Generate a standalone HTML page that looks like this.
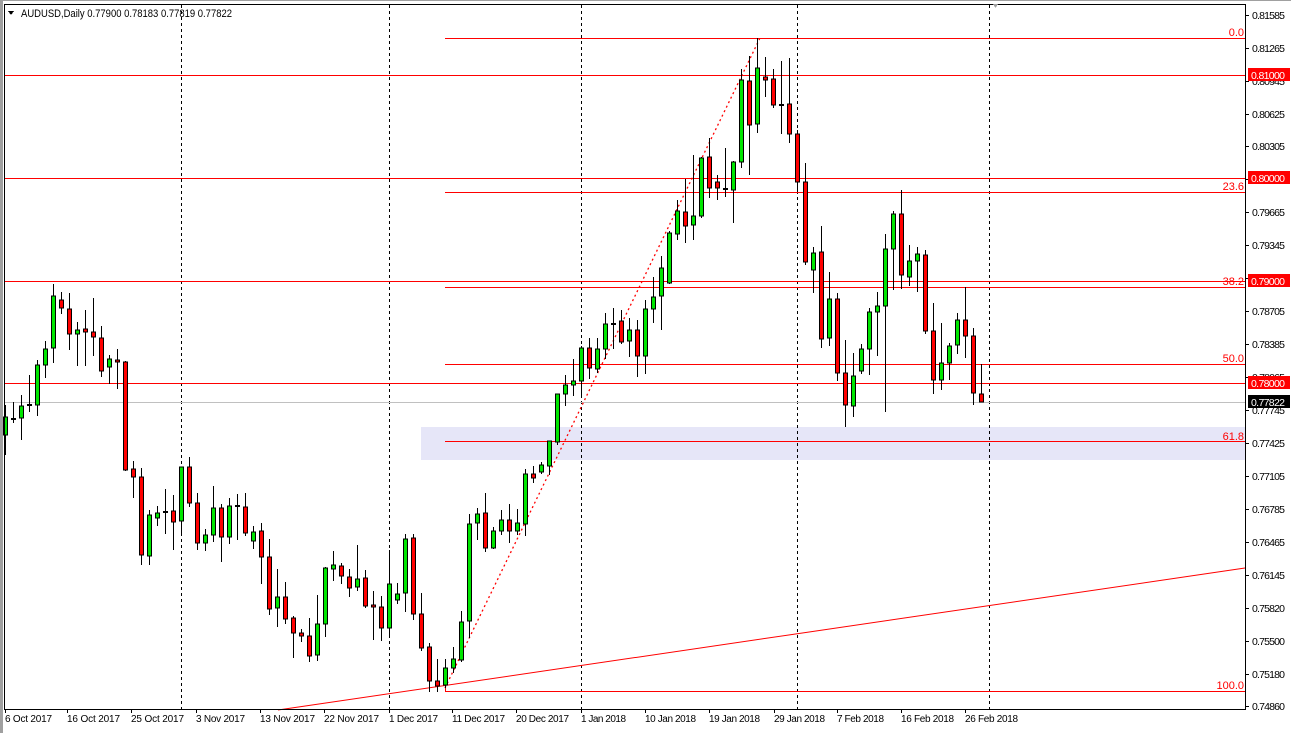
<!DOCTYPE html>
<html><head><meta charset="utf-8"><style>
html,body{margin:0;padding:0;background:#fff;}
body{width:1291px;height:733px;overflow:hidden;position:relative;font-family:"Liberation Sans",Arial,sans-serif;}
svg{position:absolute;left:0;top:0;}
text{font-family:"Liberation Sans",Arial,sans-serif;font-size:11px;}
.p{font-size:10.5px}
.d{font-size:10px}
</style></head><body>
<svg width="1291" height="733" viewBox="0 0 1291 733" shape-rendering="crispEdges">
<rect x="0" y="0" width="1291" height="733" fill="#fff"/>
<rect x="0" y="0" width="3" height="733" fill="#a0a0a0"/>
<rect x="0" y="0" width="1291" height="1" fill="#a0a0a0"/>
<rect x="421" y="427" width="824" height="33" fill="#e6e6f8"/>
<g stroke="#000" stroke-dasharray="3,3" stroke-width="1">
<path d="M181.5 5V709M389.5 5V709M581.5 5V709M797.5 5V709M989.5 5V709"/>
</g>
<g stroke="#ff0000" stroke-width="1">
<path d="M4 75.5H1245M4 178.5H1245M4 281.5H1245M4 383.5H1245"/>
<path d="M445 38.5H1245M445 192.5H1245M445 287.5H1245M445 364.5H1245M445 441.5H1245M445 691.5H1245"/>
<path d="M445.5 682V691"/>
</g>
<path d="M4 402.5H1245" stroke="#c0c0c0"/>
<line x1="278" y1="710" x2="1245" y2="568" stroke="#ff0000" stroke-width="1" shape-rendering="auto"/>
<line x1="445" y1="688" x2="760" y2="38" stroke="#ff0000" stroke-width="1.3" stroke-dasharray="2,3" shape-rendering="auto"/>
<g fill="#ff0000" font-size="10" text-anchor="end">
<text x="1244" y="36">0.0</text>
<text x="1244" y="190">23.6</text>
<text x="1244" y="285">38.2</text>
<text x="1244" y="362">50.0</text>
<text x="1244" y="440">61.8</text>
<text x="1244" y="689">100.0</text>
</g>
<g transform="translate(0.5,0)">
<path stroke="#000" stroke-width="1" fill="none" d="M5 405V455M13 402V423M21 395V440M29 375V412M37 360V416M45 341V378M53 284V363M61 292V314M69 293V350M77 322V366M85 310V366M93 298V356M101 326V377M109 355V384M117 349V389M125 361V471M133 461V498M141 468V565M149 510V565M157 506V526M165 489V534M173 495V550M181 467V535M189 457V507M197 493V550M205 529V551M213 486V542M221 504V562M229 498V544M237 494V540M245 493V536M253 526V549M261 523V584M269 539V615M277 569V627M285 582V624M293 616V658M301 629V642M309 618V662M317 595V661M325 567V637M333 551V581M341 563V584M349 569V597M357 545V591M365 570V608M373 591V640M381 596V641M389 550V636M397 583V604M405 534V612M413 534V620M421 593V651M429 643V692M437 659V692M445 659V688M453 647V673M461 611V662M469 514V638M477 508V540M485 493V552M493 527V549M501 510V535M509 504V543M517 509V535M525 469V536M533 466V483M541 462V474M549 441V475M557 394V445M565 375V406M573 359V396M581 346V396M589 338V379M597 338V373M605 313V359M613 308V349M621 310V344M629 318V357M637 320V377M645 300V374M653 277V323M661 256V330M669 231V284M677 200V240M685 179V243M693 155V240M701 157V218M709 138V198M717 175V200M725 148V197M733 161V223M741 69V168M749 56V175M757 38V133M765 57V97M773 69V108M781 61V134M789 58V143M797 130V192M805 163V265M813 247V293M821 226V348M829 272V346M837 293V381M845 340V427M853 353V417M861 344V374M869 308V375M877 292V356M885 234V412M893 211V290M901 190V289M909 245V286M917 247V292M925 250V334M933 303V394M941 323V390M949 343V380M957 313V354M965 287V358M973 328V405M981 364V402"/>
<g stroke="#000" stroke-width="1" fill="#00e600">
<rect x="3" y="417" width="4" height="18"/>
<rect x="19" y="406" width="4" height="12"/>
<rect x="35" y="365" width="4" height="40"/>
<rect x="43" y="349" width="4" height="16"/>
<rect x="51" y="296" width="4" height="52"/>
<rect x="75" y="330" width="4" height="4"/>
<rect x="107" y="359" width="4" height="8"/>
<rect x="147" y="515" width="4" height="41"/>
<rect x="155" y="513" width="4" height="5"/>
<rect x="179" y="467" width="4" height="54"/>
<rect x="203" y="535" width="4" height="8"/>
<rect x="211" y="508" width="4" height="27"/>
<rect x="227" y="506" width="4" height="31"/>
<rect x="251" y="532" width="4" height="9"/>
<rect x="275" y="597" width="4" height="11"/>
<rect x="315" y="624" width="4" height="31"/>
<rect x="323" y="568" width="4" height="56"/>
<rect x="331" y="565" width="4" height="4"/>
<rect x="355" y="579" width="4" height="8"/>
<rect x="387" y="584" width="4" height="44"/>
<rect x="395" y="594" width="4" height="6"/>
<rect x="403" y="539" width="4" height="54"/>
<rect x="443" y="668" width="4" height="17"/>
<rect x="451" y="659" width="4" height="9"/>
<rect x="459" y="622" width="4" height="38"/>
<rect x="467" y="524" width="4" height="97"/>
<rect x="475" y="514" width="4" height="9"/>
<rect x="491" y="531" width="4" height="17"/>
<rect x="499" y="520" width="4" height="11"/>
<rect x="515" y="523" width="4" height="8"/>
<rect x="523" y="474" width="4" height="50"/>
<rect x="539" y="465" width="4" height="7"/>
<rect x="547" y="441" width="4" height="25"/>
<rect x="555" y="394" width="4" height="48"/>
<rect x="563" y="385" width="4" height="9"/>
<rect x="571" y="381" width="4" height="4"/>
<rect x="579" y="348" width="4" height="33"/>
<rect x="595" y="349" width="4" height="20"/>
<rect x="603" y="324" width="4" height="25"/>
<rect x="627" y="330" width="4" height="11"/>
<rect x="643" y="309" width="4" height="47"/>
<rect x="651" y="297" width="4" height="12"/>
<rect x="659" y="268" width="4" height="28"/>
<rect x="667" y="233" width="4" height="50"/>
<rect x="675" y="211" width="4" height="23"/>
<rect x="691" y="216" width="4" height="9"/>
<rect x="699" y="158" width="4" height="58"/>
<rect x="731" y="162" width="4" height="28"/>
<rect x="739" y="80" width="4" height="82"/>
<rect x="755" y="68" width="4" height="56"/>
<rect x="811" y="253" width="4" height="17"/>
<rect x="827" y="299" width="4" height="39"/>
<rect x="851" y="376" width="4" height="30"/>
<rect x="859" y="349" width="4" height="22"/>
<rect x="867" y="312" width="4" height="37"/>
<rect x="875" y="306" width="4" height="6"/>
<rect x="883" y="249" width="4" height="57"/>
<rect x="891" y="214" width="4" height="35"/>
<rect x="907" y="261" width="4" height="16"/>
<rect x="915" y="254" width="4" height="7"/>
<rect x="939" y="363" width="4" height="17"/>
<rect x="947" y="346" width="4" height="17"/>
<rect x="955" y="320" width="4" height="25"/>
</g>
<g stroke="#000" stroke-width="1" fill="#ff0000">
<rect x="59" y="300" width="4" height="8"/>
<rect x="67" y="309" width="4" height="25"/>
<rect x="83" y="329" width="4" height="3"/>
<rect x="91" y="332" width="4" height="5"/>
<rect x="99" y="338" width="4" height="33"/>
<rect x="115" y="360" width="4" height="2"/>
<rect x="123" y="362" width="4" height="108"/>
<rect x="131" y="469" width="4" height="8"/>
<rect x="139" y="477" width="4" height="78"/>
<rect x="171" y="511" width="4" height="11"/>
<rect x="187" y="467" width="4" height="36"/>
<rect x="195" y="503" width="4" height="40"/>
<rect x="219" y="508" width="4" height="29"/>
<rect x="243" y="507" width="4" height="26"/>
<rect x="259" y="531" width="4" height="26"/>
<rect x="267" y="557" width="4" height="52"/>
<rect x="283" y="597" width="4" height="22"/>
<rect x="291" y="618" width="4" height="15"/>
<rect x="299" y="633" width="4" height="3"/>
<rect x="307" y="636" width="4" height="20"/>
<rect x="339" y="566" width="4" height="10"/>
<rect x="347" y="577" width="4" height="11"/>
<rect x="363" y="578" width="4" height="28"/>
<rect x="371" y="605" width="4" height="2"/>
<rect x="379" y="607" width="4" height="21"/>
<rect x="411" y="538" width="4" height="76"/>
<rect x="419" y="614" width="4" height="34"/>
<rect x="427" y="647" width="4" height="34"/>
<rect x="435" y="681" width="4" height="5"/>
<rect x="483" y="513" width="4" height="35"/>
<rect x="507" y="520" width="4" height="11"/>
<rect x="531" y="474" width="4" height="4"/>
<rect x="587" y="348" width="4" height="20"/>
<rect x="619" y="321" width="4" height="21"/>
<rect x="635" y="330" width="4" height="26"/>
<rect x="683" y="212" width="4" height="14"/>
<rect x="707" y="157" width="4" height="31"/>
<rect x="715" y="182" width="4" height="6"/>
<rect x="747" y="81" width="4" height="44"/>
<rect x="763" y="77" width="4" height="3"/>
<rect x="771" y="79" width="4" height="26"/>
<rect x="787" y="104" width="4" height="30"/>
<rect x="795" y="134" width="4" height="48"/>
<rect x="803" y="182" width="4" height="80"/>
<rect x="819" y="252" width="4" height="87"/>
<rect x="835" y="299" width="4" height="74"/>
<rect x="843" y="373" width="4" height="32"/>
<rect x="899" y="214" width="4" height="61"/>
<rect x="923" y="255" width="4" height="76"/>
<rect x="931" y="331" width="4" height="49"/>
<rect x="963" y="320" width="4" height="16"/>
<rect x="971" y="336" width="4" height="57"/>
<rect x="979" y="394" width="4" height="8"/>
</g>
</g>
<g fill="#000">
<rect x="11" y="418" width="5" height="2"/>
<rect x="27" y="404" width="5" height="2"/>
<rect x="163" y="511" width="5" height="2"/>
<rect x="235" y="505" width="5" height="2"/>
<rect x="611" y="323" width="5" height="2"/>
<rect x="723" y="188" width="5" height="2"/>
<rect x="779" y="104" width="5" height="2"/>
</g>
<path d="M4.5 4V709.5H1245.5V4.5H4" stroke="#000" fill="none"/>
<path d="M993 4L998 4L995.5 8Z" fill="#a0a0a0"/>
<g stroke="#000"><path d="M1246 15.5h3M1246 48.5h3M1246 81.5h3M1246 114.5h3M1246 146.5h3M1246 179.5h3M1246 212.5h3M1246 245.5h3M1246 278.5h3M1246 311.5h3M1246 344.5h3M1246 377.5h3M1246 410.5h3M1246 443.5h3M1246 476.5h3M1246 509.5h3M1246 542.5h3M1246 575.5h3M1246 608.5h3M1246 641.5h3M1246 674.5h3M1246 706.5h3"/></g>
<g fill="#000" class="p">
<text class="p" x="1252" y="19" textLength="33">0.81585</text>
<text class="p" x="1252" y="52" textLength="33">0.81265</text>
<text class="p" x="1252" y="85" textLength="33">0.80945</text>
<text class="p" x="1252" y="118" textLength="33">0.80625</text>
<text class="p" x="1252" y="150" textLength="33">0.80305</text>
<text class="p" x="1252" y="216" textLength="33">0.79665</text>
<text class="p" x="1252" y="249" textLength="33">0.79345</text>
<text class="p" x="1252" y="315" textLength="33">0.78705</text>
<text class="p" x="1252" y="348" textLength="33">0.78385</text>
<text class="p" x="1252" y="381" textLength="33">0.78065</text>
<text class="p" x="1252" y="414" textLength="33">0.77745</text>
<text class="p" x="1252" y="447" textLength="33">0.77425</text>
<text class="p" x="1252" y="480" textLength="33">0.77105</text>
<text class="p" x="1252" y="513" textLength="33">0.76785</text>
<text class="p" x="1252" y="546" textLength="33">0.76465</text>
<text class="p" x="1252" y="579" textLength="33">0.76145</text>
<text class="p" x="1252" y="612" textLength="33">0.75820</text>
<text class="p" x="1252" y="645" textLength="33">0.75500</text>
<text class="p" x="1252" y="678" textLength="33">0.75180</text>
<text class="p" x="1252" y="710" textLength="33">0.74860</text>
</g>
<g>
<rect x="1248" y="68" width="42" height="13" fill="#ff0000"/>
<rect x="1248" y="171" width="42" height="13" fill="#ff0000"/>
<rect x="1248" y="274" width="42" height="13" fill="#ff0000"/>
<rect x="1248" y="376" width="42" height="13" fill="#ff0000"/>
<rect x="1248" y="395" width="42" height="13" fill="#000"/>
</g>
<g fill="#fff">
<text class="p" x="1251" y="79" textLength="34">0.81000</text>
<text class="p" x="1251" y="182" textLength="34">0.80000</text>
<text class="p" x="1251" y="285" textLength="34">0.79000</text>
<text class="p" x="1251" y="387" textLength="34">0.78000</text>
<text class="p" x="1251" y="406" textLength="34">0.77822</text>
</g>
<g stroke="#000"><path d="M5.5 710v3M67.5 710v3M131.5 710v3M196.5 710v3M260.5 710v3M324.5 710v3M389.5 710v3M452.5 710v3M516.5 710v3M581.5 710v3M645.5 710v3M709.5 710v3M774.5 710v3M837.5 710v3M901.5 710v3M965.5 710v3"/></g>
<g fill="#000">
<text class="d" x="5" y="722" textLength="47">6 Oct 2017</text>
<text class="d" x="67" y="722" textLength="53">16 Oct 2017</text>
<text class="d" x="131" y="722" textLength="53">25 Oct 2017</text>
<text class="d" x="196" y="722" textLength="49">3 Nov 2017</text>
<text class="d" x="260" y="722" textLength="55">13 Nov 2017</text>
<text class="d" x="324" y="722" textLength="55">22 Nov 2017</text>
<text class="d" x="389" y="722" textLength="49">1 Dec 2017</text>
<text class="d" x="452" y="722" textLength="53">11 Dec 2017</text>
<text class="d" x="516" y="722" textLength="53">20 Dec 2017</text>
<text class="d" x="581" y="722" textLength="45">1 Jan 2018</text>
<text class="d" x="645" y="722" textLength="51">10 Jan 2018</text>
<text class="d" x="709" y="722" textLength="51">19 Jan 2018</text>
<text class="d" x="774" y="722" textLength="51">29 Jan 2018</text>
<text class="d" x="837" y="722" textLength="47">7 Feb 2018</text>
<text class="d" x="901" y="722" textLength="53">16 Feb 2018</text>
<text class="d" x="965" y="722" textLength="53">26 Feb 2018</text>
</g>
<path d="M8 11H14L11 15Z" fill="#000"/>
<text x="21" y="17" fill="#000" font-size="11" textLength="211" lengthAdjust="spacingAndGlyphs">AUDUSD,Daily  0.77900 0.78183 0.77819 0.77822</text>
</svg>
</body></html>
